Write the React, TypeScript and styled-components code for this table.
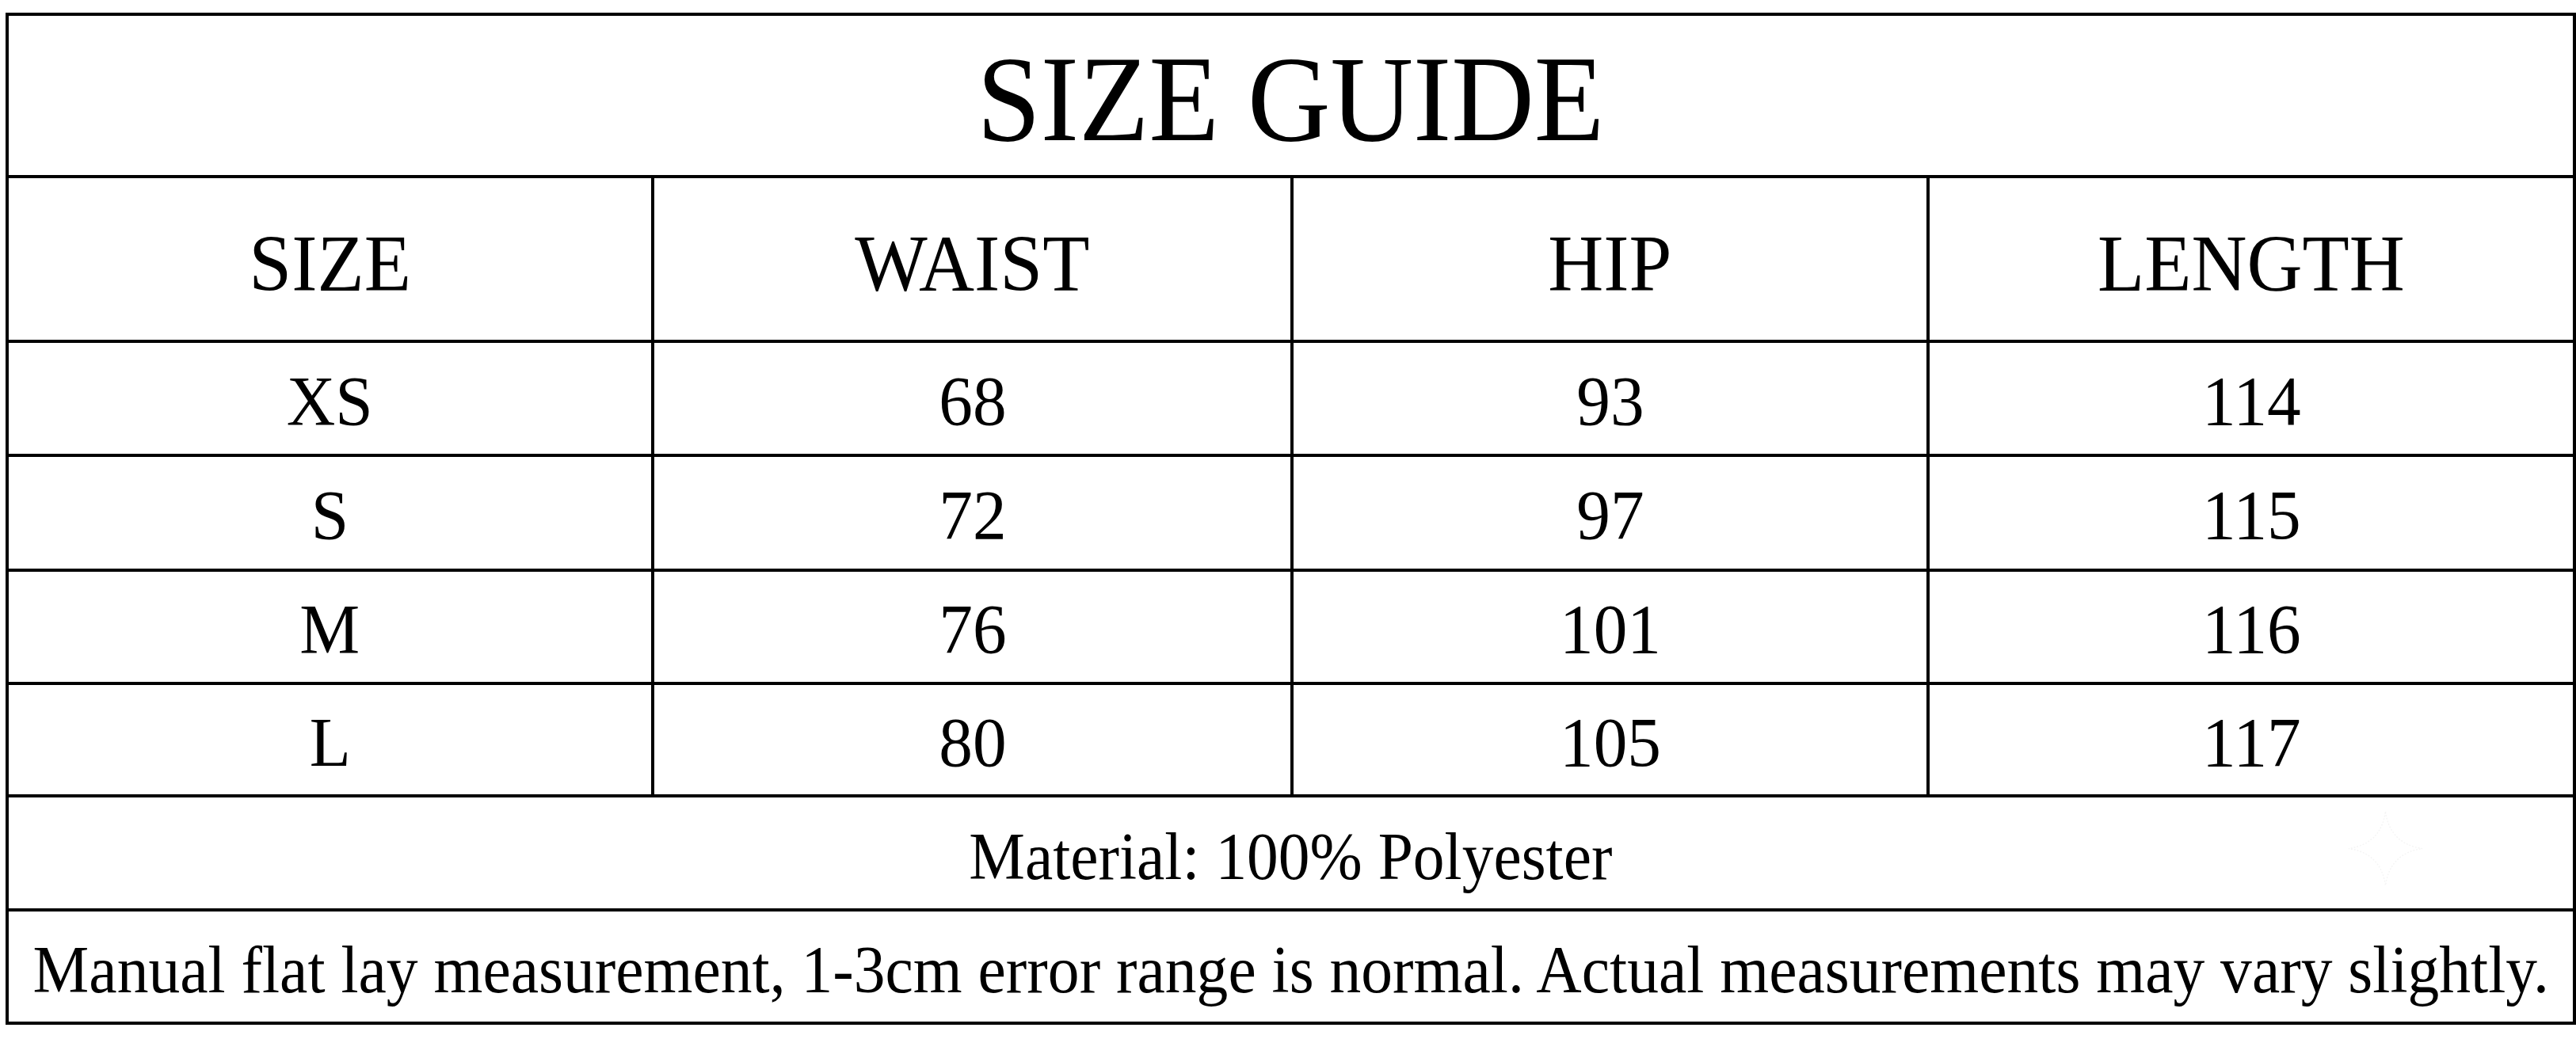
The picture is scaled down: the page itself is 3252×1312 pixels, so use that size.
import styled, { createGlobalStyle } from "styled-components";

const GlobalStyle = createGlobalStyle`
  html, body {
    margin: 0;
    padding: 0;
    background: #ffffff;
    overflow: hidden;
  }
  body {
    font-family: "Liberation Serif", "Times New Roman", serif;
    color: #000;
  }
`;

const Page = styled.div`
  width: 3252px;
  height: 1312px;
  padding: 16px 0 0 7px;
  box-sizing: border-box;
  position: relative;
`;

const Chart = styled.div`
  width: 3245px;
  display: grid;
  grid-template-columns: 811px 803px 799px 1fr;
  grid-template-rows: 201px 204px 140px 141px 139px 138px 140px 139px;
  gap: 4px;
  padding: 4px;
  box-sizing: border-box;
  background: #000;
`;

const Cell = styled.div<{ $span?: boolean; $shift?: number }>`
  grid-column: ${(p) => (p.$span ? "1 / -1" : "auto")};
  background: #fff;
  display: flex;
  align-items: center;
  justify-content: center;
  padding-top: ${(p) => p.$shift ?? 8}px;
  box-sizing: border-box;
  overflow: visible;
  min-width: 0;
`;

const Text = styled.span<{ $size: number; $squeeze?: number }>`
  display: inline-block;
  white-space: nowrap;
  font-size: ${(p) => p.$size}px;
  line-height: 1;
  transform: scaleX(${(p) => p.$squeeze ?? 1});
`;

const Watermark = styled.svg`
  position: absolute;
  left: 2963px;
  top: 1023px;
  width: 97px;
  height: 97px;
  pointer-events: none;
`;

const headers = ["SIZE", "WAIST", "HIP", "LENGTH"];

const rows = [
  ["XS", "68", "93", "114"],
  ["S", "72", "97", "115"],
  ["M", "76", "101", "116"],
  ["L", "80", "105", "117"],
];

export default function App() {
  return (
    <>
      <GlobalStyle />
      <Page>
        <Chart>
          <Cell $span $shift={9}>
            <Text $size={154} $squeeze={0.94}>
              SIZE GUIDE
            </Text>
          </Cell>
          {headers.map((h) => (
            <Cell key={h} $shift={12}>
              <Text $size={101} $squeeze={0.96}>
                {h}
              </Text>
            </Cell>
          ))}
          {rows.map((row) =>
            row.map((v, i) => (
              <Cell key={row[0] + i} $shift={7}>
                <Text $size={88} $squeeze={0.97}>
                  {v}
                </Text>
              </Cell>
            ))
          )}
          <Cell $span>
            <Text $size={85} $squeeze={0.935}>
              Material: 100% Polyester
            </Text>
          </Cell>
          <Cell $span>
            <Text $size={85} $squeeze={0.936}>
              Manual flat lay measurement, 1-3cm error range is normal. Actual measurements may vary slightly.
            </Text>
          </Cell>
        </Chart>
        <Watermark viewBox="0 0 100 100">
          <path
            d="M50 2 Q56 44 98 50 Q56 56 50 98 Q44 56 2 50 Q44 44 50 2 Z"
            fill="none"
            stroke="#f5f5f5"
            strokeWidth="1.5"
            strokeDasharray="2 2"
          />
        </Watermark>
      </Page>
    </>
  );
}
